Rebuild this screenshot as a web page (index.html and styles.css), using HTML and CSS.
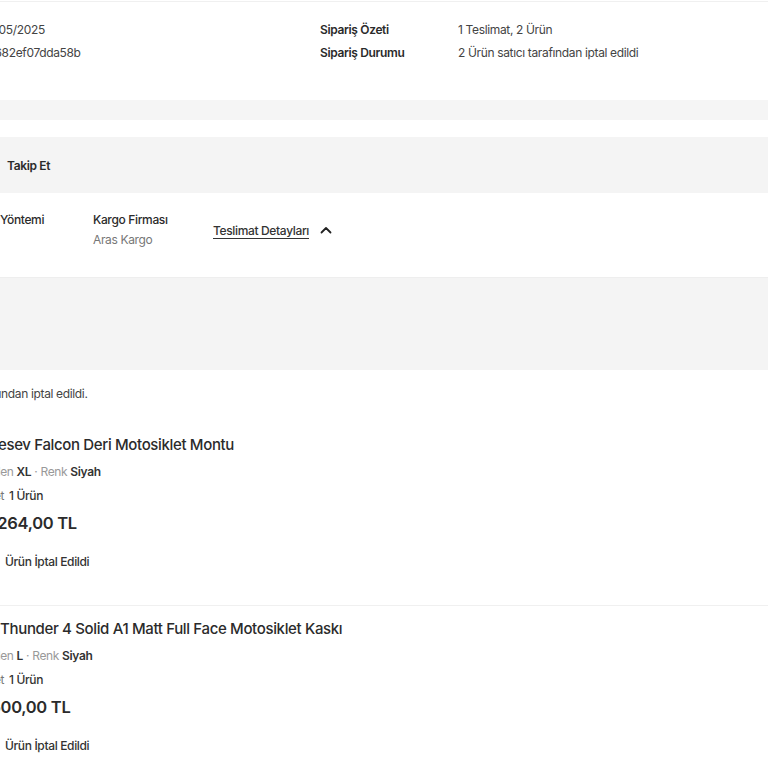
FILE: index.html
```html
<!DOCTYPE html>
<html lang="tr">
<head>
<meta charset="utf-8">
<title>Sipariş Detayı</title>
<link rel="stylesheet" href="styles.css">
</head>
<body>
<div class="page">
  <section class="summary">
    <div class="sum-grid">
      <span class="lbl">Sipariş Tarihi</span><span class="val">19/05/2025</span>
      <span class="lbl strong">Sipariş Özeti</span><span class="val">1 Teslimat, 2 Ürün</span>
      <span class="lbl">Sipariş No</span><span class="val">d1682ef07dda58b</span>
      <span class="lbl strong">Sipariş Durumu</span><span class="val">2 Ürün satıcı tarafından iptal edildi</span>
    </div>
  </section>
  <div class="band"></div>
  <section class="delivery">
    <div class="del-head">
      <span class="del-title">Teslimat 1</span>
      <span class="track">Takip Et</span>
    </div>
    <div class="del-info">
      <div class="col"><span class="k">Tahmini Teslimat</span><span class="v">-</span></div>
      <div class="col"><span class="k">Teslimat Yöntemi</span><span class="v">Standart</span></div>
      <div class="col"><span class="k">Kargo Firması</span><span class="v">Aras Kargo</span></div>
      <div class="detail-link"><span class="link">Teslimat Detayları</span>
        <svg class="chev" width="12" height="8" viewBox="0 0 12 8"><path d="M1.5 6.5 L6 2 L10.5 6.5" fill="none" stroke="#222" stroke-width="1.8" stroke-linecap="round" stroke-linejoin="round"/></svg>
      </div>
    </div>
    <div class="del-expand"></div>
  </section>
  <section class="products">
    <p class="notice"><svg class="nicon" width="16" height="16" viewBox="0 0 16 16"><circle cx="8" cy="8" r="6.5" fill="none" stroke="#333" stroke-width="1.2"/></svg><span>2 Ürün satıcı tarafından iptal edildi.</span></p>
    <article class="product">
      <div class="thumb"></div>
      <div class="pinfo">
        <h3 class="ptitle">Ozesev Falcon Deri Motosiklet Montu</h3>
        <p class="meta"><span class="mk">Beden</span> <b>XL</b> <span class="mk">· Renk</span> <b>Siyah</b></p>
        <p class="qty"><span class="mk2">Adet</span> 1 Ürün</p>
        <p class="price">11.264,00 TL</p>
        <p class="status"><svg class="sicon" width="18" height="18" viewBox="0 0 18 18"><circle cx="9" cy="9" r="7" fill="none" stroke="#333" stroke-width="1.4"/></svg>Ürün İptal Edildi</p>
      </div>
    </article>
    <article class="product">
      <div class="thumb"></div>
      <div class="pinfo">
        <h3 class="ptitle">LS Thunder 4 Solid A1 Matt Full Face Motosiklet Kaskı</h3>
        <p class="meta"><span class="mk">Beden</span> <b>L</b> <span class="mk">· Renk</span> <b>Siyah</b></p>
        <p class="qty"><span class="mk2">Adet</span> 1 Ürün</p>
        <p class="price">1.500,00 TL</p>
        <p class="status"><svg class="sicon" width="18" height="18" viewBox="0 0 18 18"><circle cx="9" cy="9" r="7" fill="none" stroke="#333" stroke-width="1.4"/></svg>Ürün İptal Edildi</p>
      </div>
    </article>
  </section>
</div>
</body>
</html>
```
FILE: styles.css
```css
* { box-sizing: border-box; }
html, body { margin: 0; padding: 0; background: #fff; overflow: hidden; }
body {
  font-family: Inter, "Noto Sans", "DejaVu Sans", sans-serif;
  color: #333;
  font-size: 12px;
  letter-spacing: -0.35px;
  width: 768px;
  height: 768px;
}
.page { margin-left: -160px; width: 928px; }

.summary {
  margin-top: 1px;
  border-top: 1px solid #f0f0f0;
  padding: 16px 0 36px 24px;
}
.sum-grid {
  display: grid;
  grid-template-columns: 119px 337px 138px 1fr;
  grid-auto-rows: 23px;
  align-items: center;
}
.lbl { color: #333; }
.lbl.strong { font-weight: 600; color: #2b2b2b; }
.val { color: #444; }

.band { height: 20px; background: #f5f5f5; margin-bottom: 17px; }

.del-head {
  height: 56px;
  background: #f4f4f4;
  display: flex;
  align-items: center;
  padding-left: 24px;
}
.del-title { width: 143px; font-weight: 600; }
.track { font-weight: 600; color: #2b2b2b; }

.del-info {
  height: 85px;
  border-bottom: 1px solid #eeeeee;
  display: grid;
  grid-template-columns: 88px 141px 120px auto;
  padding: 17px 0 0 24px;
  align-items: start;
}
.col { display: flex; flex-direction: column; }
.col .k { line-height: 20px; font-weight: 500; color: #2b2b2b; }
.col .v { line-height: 20px; color: #777; }
.detail-link { display: flex; align-items: center; gap: 11px; height: 40px; }
.link { text-decoration: underline; text-underline-offset: 3px; color: #333; font-weight: 500; }
.chev { display: block; }

.del-expand { height: 92px; background: #f4f4f4; }

.products { padding-left: 24px; }
.notice {
  margin: 0;
  padding: 14px 0 18px 16px;
  line-height: 20px;
  color: #444;
  display: flex;
  align-items: center;
  gap: 8px;
}
.nicon { display: block; flex: none; }

.product {
  display: flex;
  gap: 19px;
  padding: 12px 0 33px 0;
  border-bottom: 1px solid #f0f0f0;
}
.thumb { width: 96px; flex: none; }
.pinfo { display: flex; flex-direction: column; }
.ptitle { margin: 0; font-size: 15px; line-height: 22px; font-weight: 500; color: #2b2b2b; }
.meta { margin: 6px 0 0 0; line-height: 20px; color: #333; }
.meta .mk { color: #999; }
.meta b { font-weight: 600; color: #333; }
.qty { margin: 4px 0 0 0; line-height: 20px; font-weight: 500; color: #333; }
.qty .mk2 { color: #777; font-weight: 400; margin-right: 2px; }
.price { margin: 4px 0 0 0; line-height: 26px; font-size: 16.5px; letter-spacing: -0.3px; font-weight: 600; color: #2b2b2b; }
.status { margin: 16px 0 0 0; line-height: 20px; font-weight: 500; color: #333; display: flex; align-items: center; gap: 8px; }
.sicon { display: block; flex: none; }
```
